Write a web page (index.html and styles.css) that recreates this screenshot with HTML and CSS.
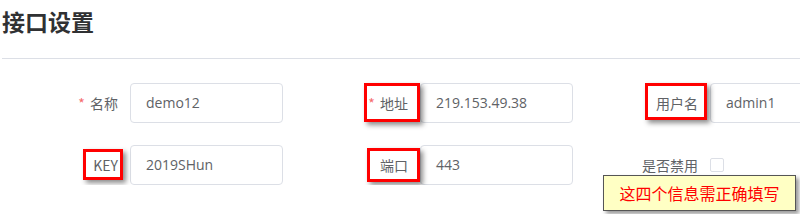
FILE: index.html
```html
<!DOCTYPE html>
<html lang="zh-CN">
<head>
<meta charset="utf-8">
<title>接口设置</title>
<link rel="stylesheet" href="styles.css">
</head>
<body>
<div class="page">
  <h1 class="title">接口设置</h1>
  <div class="divider"></div>
  <form class="form">
    <div class="item">
      <label class="label"><span><i class="req">*</i> 名称</span></label>
      <div class="input">demo12</div>
    </div>
    <div class="item">
      <label class="label"><span class="mark mark-addr"><i class="req">*</i> 地址</span></label>
      <div class="input">219.153.49.38</div>
    </div>
    <div class="item">
      <label class="label"><span class="mark mark-user">用户名</span></label>
      <div class="input">admin1</div>
    </div>
    <div class="item">
      <label class="label"><span class="mark mark-key">KEY</span></label>
      <div class="input">2019SHun</div>
    </div>
    <div class="item">
      <label class="label"><span class="mark mark-port">端口</span></label>
      <div class="input">443</div>
    </div>
    <div class="item">
      <label class="label"><span>是否禁用</span></label>
      <div class="check"><span class="box"></span></div>
    </div>
  </form>
  <div class="note">这四个信息需正确填写</div>
</div>
</body>
</html>
```

FILE: styles.css
```css
html, body {
  margin: 0;
  padding: 0;
  background: #fff;
  overflow: hidden;
}
body {
  width: 800px;
  height: 214px;
  font-family: "Open Sans", "Noto Sans CJK SC", sans-serif;
  color: #606266;
}
.page {
  position: relative;
  padding: 5px 0 0 2px;
}
.title {
  margin: 0;
  font-family: "Noto Sans CJK SC", sans-serif;
  font-size: 23px;
  font-weight: 700;
  line-height: 32px;
  color: #303133;
}
.divider {
  margin-top: 21px;
  height: 0;
  border-top: 1px solid #dcdfe6;
}
.form {
  display: grid;
  grid-template-columns: 290px 290px 218px;
  row-gap: 22px;
  padding: 24px 0 0 8px;
  overflow: hidden;
}
.item {
  display: flex;
  align-items: center;
  height: 40px;
  min-width: 0;
  overflow: visible;
}
.label {
  flex: 0 0 auto;
  width: 120px;
  box-sizing: border-box;
  padding-right: 12px;
  display: flex;
  justify-content: flex-end;
  font-family: "Noto Sans CJK SC", sans-serif;
  font-size: 14px;
  line-height: 20px;
  color: #606266;
}
.label span {
  position: relative;
  white-space: nowrap;
}
.req {
  font-style: normal;
  color: #f56c6c;
  margin-right: 2px;
}
.mark::after {
  content: "";
  position: absolute;
  top: -9px;
  bottom: -9px;
  left: -11px;
  right: -12px;
  border: 3px solid #f00;
  box-shadow: 3px 3px 5px rgba(0, 0, 0, 0.45);
}
.mark-addr::after { left: -4px; right: -12px; top: -10px; bottom: -9px; }
.mark-user::after { left: -11px; right: -9px; top: -10px; bottom: -7px; }
.mark-key::after { left: -10px; right: -5px; top: -6px; bottom: -5px; }
.mark-port::after { left: -13px; right: -12px; top: -7px; bottom: -7px; }
.input {
  flex: 0 0 auto;
  width: 153px;
  height: 40px;
  box-sizing: border-box;
  border: 1px solid #dcdfe6;
  border-radius: 4px;
  padding: 0 15px;
  font-size: 14px;
  line-height: 38px;
  color: #606266;
  background: #fff;
  white-space: nowrap;
}
.check {
  display: flex;
  align-items: center;
}
.box {
  display: block;
  width: 14px;
  height: 14px;
  box-sizing: border-box;
  border: 1px solid #dcdfe6;
  border-radius: 2px;
  background: #fff;
}
.note {
  position: absolute;
  left: 603px;
  top: 175px;
  width: 193px;
  height: 36px;
  box-sizing: border-box;
  background: #ffffc4;
  border: 1px solid #555;
  box-shadow: 3px 3px 4px rgba(0, 0, 0, 0.4);
  color: #f00;
  font-family: "Noto Sans CJK SC", sans-serif;
  font-size: 16px;
  line-height: 34px;
  text-align: center;
}
```
